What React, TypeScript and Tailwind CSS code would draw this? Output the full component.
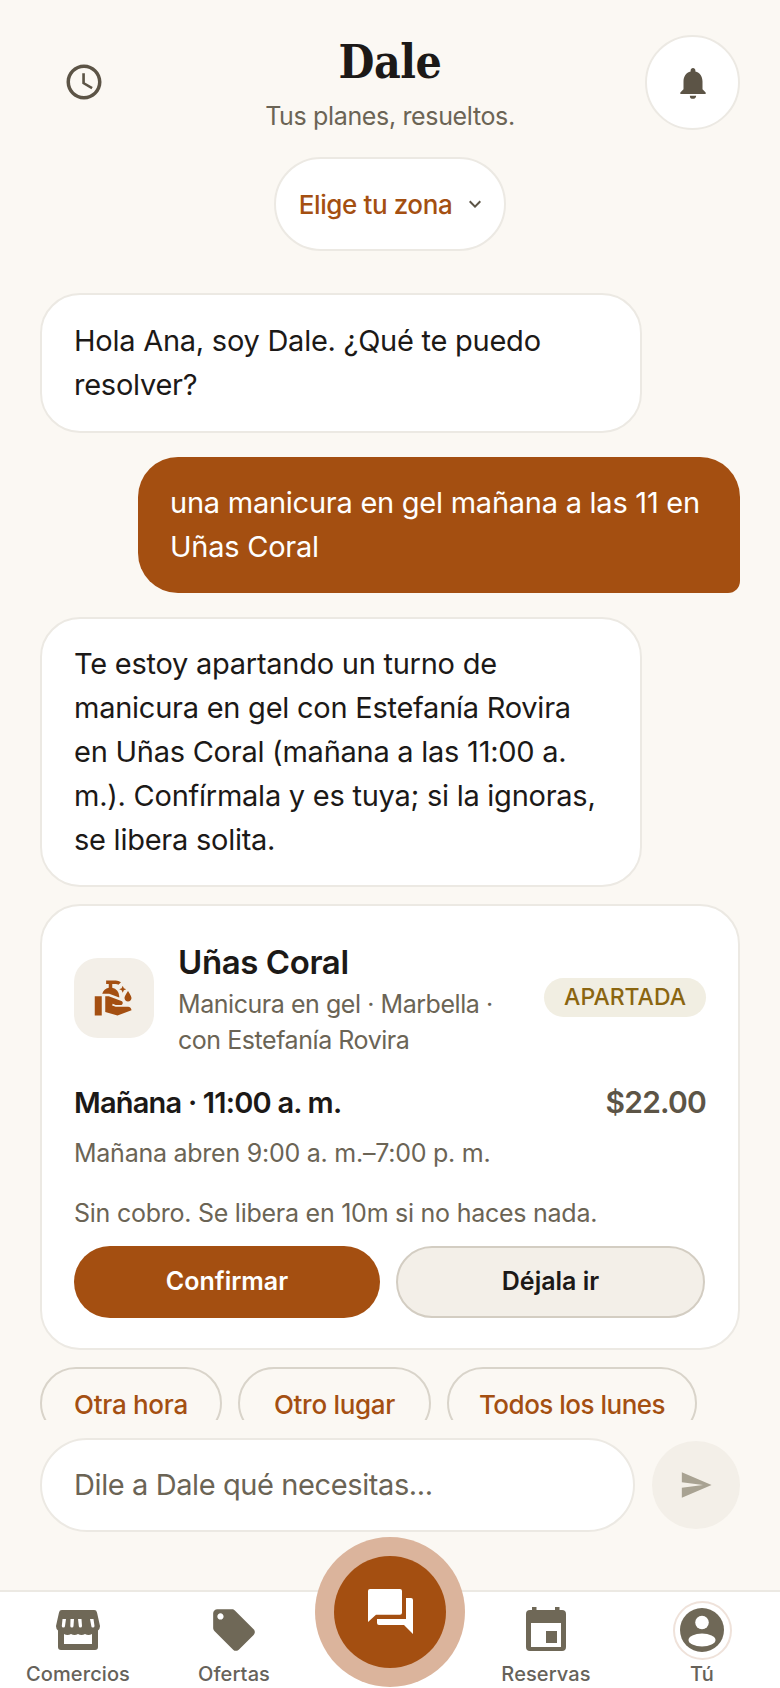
import { MdAccessTime, MdCleanHands, MdKeyboardArrowDown, MdLocalOffer, MdNotifications, MdSend } from "react-icons/md";

const sans = "font-['Inter',sans-serif]";

const NavItem = ({ icon, label }: { icon: React.ReactNode; label: string }) => (
  <div className="flex w-[156px] flex-col items-center pt-[3px]">
    <div className="flex h-[70px] items-center justify-center text-[#6f6857]">{icon}</div>
    <span className="-mt-[2px] text-[20px] font-medium leading-[22px] tracking-[0.1px] text-[#66625a]">{label}</span>
  </div>
);

const StoreIcon = () => (
  <svg width="44" height="40" viewBox="0 0 44 40" fill="currentColor">
    <path d="M6 0h32a3 3 0 0 1 3 2.4l3 13.6a6 6 0 0 1-2 4.6V37a3 3 0 0 1-3 3H5a3 3 0 0 1-3-3V20.6A6 6 0 0 1 0 16L3 2.4A3 3 0 0 1 6 0z" />
    <path fill="#fff" d="M8 24q3.5 2 7 0 3.500 2 7 0 3.500 2 7 0 3.500 2 7 0v10H8z" />
    <path fill="#fff" d="M6.500 9h3.500l-1 7a1.500 1.500 0 0 1-3.200 0zM14.500 9h3.500l-.5 7a1.600 1.600 0 0 1-3.200 0zM22 9h3.500l.5 7a1.600 1.600 0 0 1-3.200 0zM34 9h3.500l1 7a1.600 1.600 0 0 1-3.200 0z" />
  </svg>
);

const CalendarIcon = () => (
  <svg width="40" height="44" viewBox="0 0 40 44" fill="currentColor" className="-mt-[3px]">
    <path d="M6 0h4.500v3h18.500V0h4.500v3H36a4 4 0 0 1 4 4v33a4 4 0 0 1-4 4H4a4 4 0 0 1-4-4V7a4 4 0 0 1 4-4h2z" />
    <rect x="5" y="16" width="30" height="24" fill="#fff" />
    <rect x="20" y="24" width="11" height="12" />
  </svg>
);

const AccountIcon = () => (
  <div className="flex h-[59px] w-[59px] items-center justify-center rounded-full border-2 border-[#efe2da]">
    <svg width="44" height="44" viewBox="0 0 44 44">
      <circle cx="22" cy="22" r="22" fill="currentColor" />
      <circle cx="22" cy="14.500" r="6.800" fill="#fff" />
      <ellipse cx="22" cy="32" rx="13.500" ry="6.500" fill="#fff" />
    </svg>
  </div>
);

const ChatIcon = () => (
  <svg width="45" height="45" viewBox="0 0 45 45" fill="#fff" className="-mt-[2px]">
    <path d="M2 0h30a2 2 0 0 1 2 2v21.700a2 2 0 0 1-2 2H8L0 33V2a2 2 0 0 1 2-2z" />
    <path d="M38 9h5a2 2 0 0 1 2 2v34l-9-9H11a2 2 0 0 1-2-2v-4h29z" />
  </svg>
);

export default function App() {
  return (
    <div className={`relative flex h-[1688px] w-[780px] flex-col overflow-hidden bg-[#fbf8f3] ${sans}`}>
      {/* header */}
      <header className="relative flex h-[129px] shrink-0 flex-col items-center pt-[34px]">
        <MdAccessTime className="absolute left-[63px] top-[61px] text-[#5c5446]" size={42} />
        <h1 className="font-['DejaVu_Serif',serif] text-[46px] font-bold leading-[56px] tracking-[-0.5px] text-[#1c1917] [font-stretch:condensed]">Dale</h1>
        <p className="mt-[10px] text-[25px] leading-[32px] tracking-[-0.35px] text-[#6b6455]">Tus planes, resueltos.</p>
        <div className="absolute left-[645px] top-[35px] flex h-[95px] w-[95px] items-center justify-center rounded-full border-2 border-[#ece9e3] bg-white">
          <MdNotifications className="text-[#5c5446]" size={38} />
        </div>
      </header>

      <div className="mt-[28px] flex justify-center">
        <div className="flex h-[94px] w-[232px] items-center justify-center gap-[11px] rounded-[47px] border-2 border-[#ece9e3] bg-white pl-[6px]">
          <span className="text-[26px] font-medium tracking-[-0.4px] text-[#a44f11]">Elige tu zona</span>
          <MdKeyboardArrowDown className="text-[#5c5446]" size={24} />
        </div>
      </div>

      {/* messages */}
      <div className="mt-[42px] flex flex-col px-[40px]">
        <div className="w-[602px] rounded-[40px] border-2 border-[#ece9e3] bg-white px-[32px] py-[24px] text-[29px] leading-[44px] tracking-[-0.25px] text-[#1c1917]">
          Hola Ana, soy Dale. ¿Qué te puedo resolver?
        </div>
        <div className="mt-[24px] ml-[98px] w-[602px] rounded-[40px] rounded-br-[12px] bg-[#a44f11] px-[32px] py-[24px] text-[29px] leading-[44px] tracking-[-0.25px] text-white">
          una manicura en gel mañana a las 11 en Uñas Coral
        </div>
        <div className="mt-[24px] w-[602px] rounded-[40px] border-2 border-[#ece9e3] bg-white px-[32px] py-[23px] text-[29px] leading-[44px] tracking-[-0.25px] text-[#1c1917]">
          Te estoy apartando un turno de manicura en gel con Estefanía Rovira en Uñas Coral (mañana a las 11:00 a. m.). Confírmala y es tuya; si la ignoras, se libera solita.
        </div>

        {/* card */}
        <div className="mt-[17px] h-[446px] rounded-[40px] border-2 border-[#ece9e3] bg-white px-[32px] pt-[31px]">
          <div className="flex items-center">
            <div className="flex h-[80px] w-[80px] shrink-0 items-center justify-center rounded-[24px] bg-[#f3efe8]">
              <MdCleanHands className="text-[#a44f11]" size={42} />
            </div>
            <div className="ml-[24px] w-[320px] pt-[4px]">
              <div className="text-[33px] font-semibold leading-[42px] tracking-[-0.4px] text-[#1c1917]">Uñas Coral</div>
              <div className="mt-[3px] text-[25px] leading-[36px] tracking-[-0.45px] text-[#6b6455]">Manicura en gel · Marbella · con Estefanía Rovira</div>
            </div>
            <div className="ml-auto rounded-[20px] bg-[#f1eee2] px-[20px] py-[4px] text-[23px] font-medium leading-[31px] text-[#8a6510]">APARTADA</div>
          </div>
          <div className="mt-[22px] flex items-center justify-between">
            <span className="text-[29px] font-semibold tracking-[-0.8px] text-[#1c1917]">Mañana · 11:00 a. m.</span>
            <span className="text-[30px] font-semibold tracking-[-0.8px] text-[#5c5446]">$22.00</span>
          </div>
          <p className="mt-[10px] text-[25px] leading-[36px] tracking-[-0.25px] text-[#6b6455]">Mañana abren 9:00 a. m.–7:00 p. m.</p>
          <p className="mt-[24px] text-[25px] leading-[36px] tracking-[-0.25px] text-[#6b6455]">Sin cobro. Se libera en 10m si no haces nada.</p>
          <div className="mt-[15px] flex gap-[16px]">
            <div className="flex h-[72px] w-[306px] items-center justify-center rounded-[36px] bg-[#a44f11] text-[25px] font-semibold text-white">Confirmar</div>
            <div className="flex h-[72px] w-[309px] items-center justify-center rounded-[36px] border-2 border-[#d3cdc2] bg-[#f3efe8] text-[25px] font-semibold text-[#1c1917]">Déjala ir</div>
          </div>
        </div>

        {/* suggestions */}
        <div className="mt-[17px] flex h-[53px] gap-[16px] overflow-hidden">
          <div className="flex h-[72px] w-[182px] shrink-0 justify-center rounded-[36px] border-2 border-[#d9d4ca] pt-[20px] text-[26px] font-medium leading-[32px] tracking-[-0.3px] text-[#a44f11]">Otra hora</div>
          <div className="flex h-[72px] w-[193px] shrink-0 justify-center rounded-[36px] border-2 border-[#d9d4ca] pt-[20px] text-[26px] font-medium leading-[32px] tracking-[-0.3px] text-[#a44f11]">Otro lugar</div>
          <div className="flex h-[72px] w-[250px] shrink-0 justify-center rounded-[36px] border-2 border-[#d9d4ca] pt-[20px] text-[26px] font-medium leading-[32px] tracking-[-0.5px] text-[#a44f11]">Todos los lunes</div>
        </div>

        {/* composer */}
        <div className="mt-[18px] flex items-center gap-[17px]">
          <div className="flex h-[94px] w-[595px] items-center rounded-[47px] border-2 border-[#ece9e3] bg-white px-[32px] text-[29px] tracking-[-0.4px] text-[#6b6455]">
            Dile a Dale qué necesitas...
          </div>
          <div className="flex h-[88px] w-[88px] items-center justify-center rounded-full bg-[#f3efe8]">
            <MdSend className="text-[#a8a292]" size={34} />
          </div>
        </div>
      </div>

      {/* bottom nav */}
      <nav className="mt-auto flex h-[98px] shrink-0 border-t-2 border-[#ece9e3] bg-white">
        <NavItem icon={<StoreIcon />} label="Comercios" />
        <NavItem icon={<MdLocalOffer size={50} />} label="Ofertas" />
        <div className="w-[156px]" />
        <NavItem icon={<CalendarIcon />} label="Reservas" />
        <NavItem icon={<AccountIcon />} label="Tú" />
      </nav>
      <div className="absolute left-[315px] top-[1537px] flex h-[150px] w-[150px] items-center justify-center rounded-full bg-[#dbb49c]">
        <div className="flex h-[112px] w-[112px] items-center justify-center rounded-full bg-[#a44f11]">
          <ChatIcon />
        </div>
      </div>
    </div>
  );
}
